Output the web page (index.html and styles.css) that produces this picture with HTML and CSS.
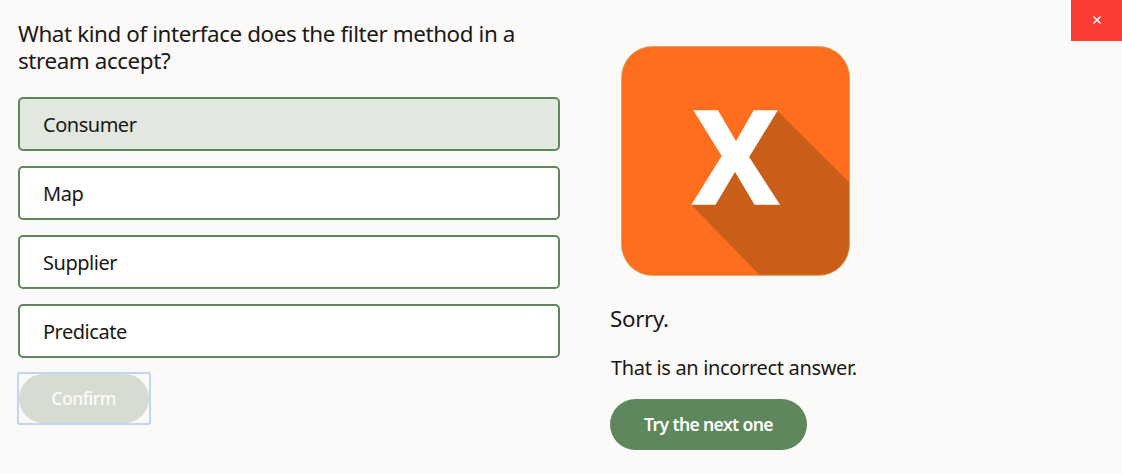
FILE: index.html
```html
<!DOCTYPE html>
<html lang="en">
<head>
<meta charset="utf-8">
<title>Quiz</title>
<link rel="stylesheet" href="styles.css">
</head>
<body>
<main class="quiz">
  <section class="question">
    <h1 class="prompt">What kind of interface does the filter method in a stream accept?</h1>
    <div class="options">
      <div class="option selected">Consumer</div>
      <div class="option">Map</div>
      <div class="option">Supplier</div>
      <div class="option">Predicate</div>
    </div>
    <div class="focus-ring"><button class="confirm" disabled>Confirm</button></div>
  </section>
  <section class="feedback">
    <svg class="badge" width="230" height="230" viewBox="0 0 230 230">
      <defs><clipPath id="tile"><rect x="0.5" y="0.5" width="228" height="229" rx="31"/></clipPath></defs>
      <rect x="0.5" y="0.5" width="228" height="229" rx="31" fill="#ff6e1f"/>
      <path clip-path="url(#tile)" d="M155.500 64L228.500 136.500V228.500H138L70.500 159L115 105Z" fill="#c95e18"/>
      <rect x="0.5" y="0.5" width="228" height="229" rx="31" fill="none" stroke="#c9a45a" stroke-width="0.7"/>
      <text class="mark" transform="translate(114.600 157.100) scale(0.965 1)" text-anchor="middle">X</text>
    </svg>
    <h2 class="verdict">Sorry.</h2>
    <p class="detail">That is an incorrect answer.</p>
    <button class="next">Try the next one</button>
  </section>
  <button class="close" aria-label="Close"><svg width="10" height="10" viewBox="0 0 10 10"><path d="M1.500 1.500L8.500 8.500M8.500 1.500L1.500 8.500" stroke="#fff" stroke-width="1.500"/></svg></button>
</main>
</body>
</html>
```
FILE: styles.css
```css
* { box-sizing: border-box; }
body {
  margin: 0;
  background: #fcfaf8;
  color: #1a1816;
  font-family: "Noto Sans", "Open Sans", sans-serif;
}
button { border: 0; padding: 0; font-family: inherit; }
.quiz { display: flex; height: 474px; overflow: hidden; }
.question { width: 542px; margin-left: 18px; padding-top: 20px; }
.prompt {
  width: 510px;
  margin: 0;
  height: 77px;
  font-size: 22.4px;
  font-weight: 400;
  line-height: 27px;
  letter-spacing: -0.4px;
}
.options { display: flex; flex-direction: column; gap: 15px; }
.option {
  display: flex;
  align-items: center;
  height: 54px;
  padding: 2px 0 0 23px;
  border: 2px solid #5f875d;
  border-radius: 5px;
  background: #fff;
  font-size: 20px;
  line-height: 28px;
  letter-spacing: -0.48px;
}
.selected { background: #e2e7e0; }
.focus-ring {
  width: 134px;
  height: 53px;
  margin: 14px 0 0 -1px;
  border: 2px solid #c0d5ef;
  border-radius: 3px;
}
.confirm {
  display: block;
  width: 130px;
  height: 49px;
  padding: 0 1px 1px 0;
  border-radius: 25px;
  background: #d7dcd2;
  color: #fcfaf8;
  font-size: 17.6px;
  font-weight: 500;
  letter-spacing: -0.5px;
}
.feedback { flex: 1; margin-left: 50px; padding-top: 46px; }
.badge { display: block; margin-left: 11px; }
.mark {
  font: 700 128px "Open Sans", sans-serif;
  fill: #fff;
  stroke: #fff;
  stroke-width: 3.4px;
  stroke-linejoin: miter;
}
.verdict {
  margin: 28px 0 0;
  font-size: 22.4px;
  font-weight: 400;
  line-height: 30px;
  letter-spacing: -0.35px;
}
.detail {
  margin: 20px 0 0 1px;
  font-size: 20px;
  line-height: 28px;
  letter-spacing: -0.33px;
}
.next {
  display: block;
  width: 197px;
  height: 51px;
  margin-top: 17px;
  padding-bottom: 1px;
  border-radius: 25.5px;
  background: #5f875d;
  color: #fff;
  font-size: 17.6px;
  font-weight: 600;
  letter-spacing: -0.65px;
}
.close {
  display: flex;
  align-items: center;
  justify-content: center;
  width: 51px;
  height: 41px;
  padding-bottom: 1px;
  background: #fa3c34;
}
```
